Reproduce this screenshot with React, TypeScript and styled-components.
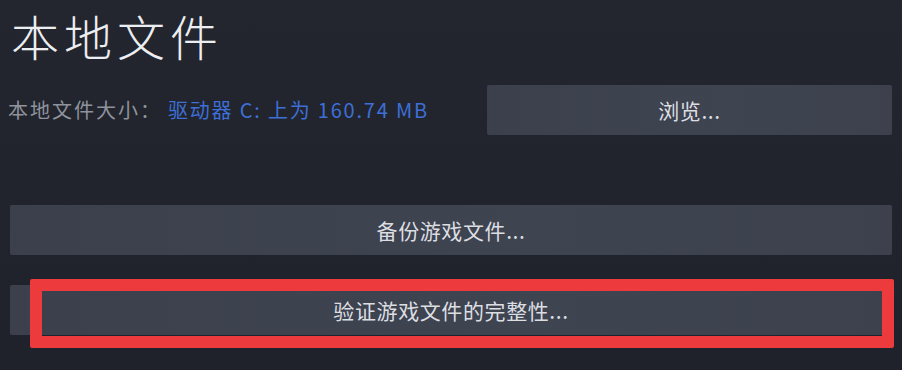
import styled, { createGlobalStyle } from 'styled-components'

const GlobalStyle = createGlobalStyle`
  html, body {
    margin: 0;
    padding: 0;
    background: #21242c;
  }
  body {
    font-family: "Noto Sans CJK SC", "Noto Sans", "Liberation Sans", sans-serif;
  }
`

const Page = styled.div`
  width: 902px;
  height: 370px;
  box-sizing: border-box;
  padding: 7px 10px 0 10px;
  background: linear-gradient(180deg, #23262f 0%, #1f222a 100%);
  overflow: hidden;
`

const Title = styled.h1`
  margin: 0;
  padding-left: 1px;
  font-size: 48px;
  font-weight: 300;
  line-height: 56px;
  letter-spacing: 5px;
  color: #eceef1;
`

const SizeRow = styled.div`
  display: flex;
  align-items: center;
  justify-content: space-between;
  margin-top: 22px;
`

const SizeInfo = styled.div`
  display: flex;
  align-items: center;
  font-size: 20px;
  margin-left: -2px;
  margin-top: -2px;
`

const SizeLabel = styled.span`
  color: #8f939b;
  letter-spacing: 2px;
`

const SizeValue = styled.span`
  color: #3d6fd6;
  margin-left: 6px;
  letter-spacing: 1.8px;
`

const Button = styled.button<{ $width?: string }>`
  display: flex;
  align-items: center;
  justify-content: center;
  width: ${({ $width }) => $width ?? '100%'};
  height: 50px;
  border: none;
  border-radius: 2px;
  background: linear-gradient(90deg, #3b404c 0%, #3f4451 60%, #3c414d 100%);
  color: #dcdee2;
  font-family: "Noto Sans CJK SC", "Noto Sans", sans-serif;
  font-size: 21px;
  letter-spacing: 0.6px;
  padding: 0;
  cursor: pointer;
`

const Actions = styled.div`
  display: flex;
  flex-direction: column;
  gap: 30px;
  margin-top: 70px;
`

const Highlight = styled.div`
  position: relative;
`

const RedFrame = styled.div`
  position: absolute;
  left: 20px;
  right: -2px;
  top: -6px;
  bottom: -13px;
  border: 12px solid #ec3a3d;
  border-radius: 2px;
  pointer-events: none;
`

export default function App() {
  return (
    <>
      <GlobalStyle />
      <Page>
        <Title>本地文件</Title>
        <SizeRow>
          <SizeInfo>
            <SizeLabel>本地文件大小：</SizeLabel>
            <SizeValue>驱动器 C: 上为 160.74 MB</SizeValue>
          </SizeInfo>
          <Button $width="405px">浏览...</Button>
        </SizeRow>
        <Actions>
          <Button>备份游戏文件...</Button>
          <Highlight>
            <Button>验证游戏文件的完整性...</Button>
            <RedFrame />
          </Highlight>
        </Actions>
      </Page>
    </>
  )
}
